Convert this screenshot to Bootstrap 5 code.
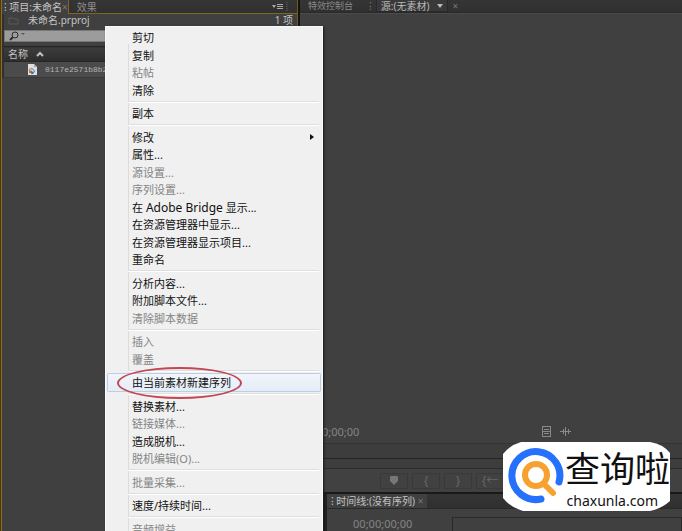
<!DOCTYPE html>
<html lang="zh-CN">
<head>
<meta charset="utf-8">
<meta name="viewport" content="width=device-width, initial-scale=1">
<title>未命名.prproj</title>
<link href="https://cdn.jsdelivr.net/npm/bootstrap@5.3.0/dist/css/bootstrap.min.css" rel="stylesheet">
<style>
body{background:#404040;color:#bdbdbd;font:10px/13px "Noto Sans","Noto Sans CJK SC",sans-serif}
button,input{font:inherit;color:inherit}
button{background:none;border:0;padding:0;white-space:nowrap}
svg{display:block;flex:none}
.project{width:44%;border-right:2px solid #15140c;border-left:1px solid #4a3a10}
.project-inner{border-left:1px solid #8a6c22;border-right:1px solid #6f5b20}
.tabs{height:13px;background:linear-gradient(#353535,#303030)}
.project .tabs{height:14px;line-height:12px}
.tab-off{border-bottom:1px solid #80661f;border-left:1px solid #80661f;color:#8c8c8c}
.tab-on{background:#404040;color:#c4c4c4}
.project .tab-on{padding:0 0 0 2px}
.dim{color:#777}
.tab-idle{color:#8a8a8a;font-size:9px}
.project-body{border-left:2px solid #303030}
.meta{height:13px;color:#c4c4c4}
.search{height:12px;background:#9c9c9c;border:1px solid #777;color:#333;margin-top:3px}
.search input{background:none;border:0;outline:0;min-width:0;height:10px}
.list thead th{height:15px;margin:0;padding:0 0 0 4px;background:linear-gradient(#3c3c3c,#2d2d2d);border-top:1px solid #262626;border-bottom:1px solid #252525;font-weight:400;color:#c4c4c4}
.list td{height:16px;padding:0 0 0 23px;background:#4b4b4b;color:#b4b4b4;border-bottom:1px solid #393939;font:8px/13px "Liberation Mono",monospace}
.monitor .tabs{border-bottom:1px solid #292929;line-height:12px}
.source-tab{background:#393939;border:1px solid #292929;border-top:0;color:#b8b8b8}
.view{border-top:1px solid #4b4b4b}
.code{color:#858585;font:11px/14px "Noto Sans",sans-serif}
.scrub{height:16px;border-top:1px solid #333;border-bottom:1px solid #242424;background:#3d3d3d}
.scrub-low{height:10px;border-bottom:1px solid #2b2b2b;background:#3d3d3d}
.transport{height:25px;background:#414141;border-bottom:2px solid #191919;padding-left:80px}
.transport button{width:28px;height:16px;border:1px solid #393939;color:#666;font-size:12px;line-height:12px}
.timeline{height:37px;border-left:4px solid #202020;margin-left:23px}
.timeline .tabs{height:15px;line-height:14px;border-bottom:1px solid #292929}
.timeline-body{padding-left:26px}
.tracks{border:1px solid #292929;border-bottom:0;margin-left:40px}
.context{left:105px;top:26px;width:218px;padding:2px;background:#f0f0f0;border:1px solid #fafafa;box-shadow:1px 1px 2px #181818;color:#111;font:11px/17px "Noto Sans","Noto Sans CJK SC",sans-serif;background-image:linear-gradient(#dcdcdc,#dcdcdc);background-repeat:no-repeat;background-size:1px 100%;background-position:22px 17px}
.context button{height:17px;padding:0 6px 0 24px;text-align:left}
.context button:nth-of-type(even){height:18px}
.context button:disabled{color:#858585}
.context hr{margin:2px 1px 2px 20px;height:2px;border:0;border-top:1px solid #dedede;border-bottom:1px solid #fff;opacity:1;background:none}
.latin{font-size:12px}
.context .chosen{background:linear-gradient(#f2f5fa,#e4ecf7);box-shadow:0 0 0 1px #b9cfe6;border-radius:1px}
.ring{left:9px;top:-7px;width:125px;height:32px;border:2px solid #c34653;border-radius:50%}
.brand{right:12px;bottom:20px;width:167px;height:69px;color:#111}
.brand-name{font:35px/50px "Noto Sans CJK SC",sans-serif}
.brand-site{font:14px/18px "Noto Sans",sans-serif;padding-right:12px}
</style>
<script src="https://cdn.jsdelivr.net/npm/bootstrap@5.3.0/dist/js/bootstrap.bundle.min.js"></script>
</head>
<body class="m-0 overflow-hidden">
<main class="d-flex vh-100 position-relative overflow-hidden">
  <section class="project d-flex flex-shrink-0">
    <div class="project-inner flex-fill">
      <div class="tabs d-flex">
        <button class="tab-on">⁝ 项目:未命名<span class="dim">×</span></button>
        <div class="tab-off d-flex flex-fill align-items-center justify-content-between">
          <button class="ps-2">效果</button>
          <button class="pe-2" aria-label="面板菜单"><svg width="17" height="10" viewBox="0 0 17 10"><path d="M0 3h4l-2 3zM5 2h6v1H5zm0 2h6v1H5zm0 2h6v1H5z" fill="#aaa"/><path d="M15 0v10" stroke="#666" stroke-dasharray="1 1"/></svg></button>
        </div>
      </div>
      <div class="project-body">
        <div class="meta d-flex align-items-center pe-1">
          <svg class="ms-1 me-2" width="12" height="10" viewBox="0 0 12 10"><path d="M1 8V2h4l1 1h4v5z" fill="none" stroke="#595959"/></svg>
          <span>未命名.prproj</span><span class="ms-auto">1 项</span>
        </div>
        <label class="search d-flex align-items-center">
          <svg class="ms-1" width="20" height="10" viewBox="0 0 20 10"><circle cx="6" cy="4" r="3" fill="none" stroke="#2d2d2d"/><path d="M4 6 1 9" stroke="#2d2d2d" stroke-width="2"/><path d="M12 2h4l-2 2z" fill="#555"/></svg>
          <input class="flex-fill" type="text" aria-label="搜索">
        </label>
        <table class="list w-100 mt-1">
          <thead><tr><th scope="col"><span class="d-flex align-items-center gap-2">名称<svg width="8" height="6" viewBox="0 0 8 6"><path d="M1 5l3-3 3 3" fill="none" stroke="#c4c4c4" stroke-width="2"/></svg></span></th></tr></thead>
          <tbody><tr><td><span class="d-flex align-items-center gap-2"><svg width="10" height="11" viewBox="0 0 10 11"><path d="M1 0h6l3 3v8H1z" fill="#dedede"/><path d="M7 0v3h3" fill="#a5a5a5"/><path d="M2 5l3-1v5H2z" fill="#b77848"/><path d="M5 4l3 3-2 3H4z" fill="#456ba7"/><path d="M3 6h3v2" stroke="#fff" fill="none"/></svg>0117e2571b8b24</span></td></tr></tbody>
        </table>
      </div>
    </div>
  </section>
  <section class="monitor d-flex flex-column flex-fill">
    <div class="tabs d-flex">
      <button class="tab-idle ps-2 pe-3">特效控制台</button>
      <span class="dim pe-1">⁝</span>
      <button class="source-tab px-1 d-flex align-items-center gap-2">源:(无素材)<svg width="6" height="4" viewBox="0 0 6 4"><path d="M0 0h6L3 4z" fill="#bbb"/></svg></button>
      <button class="dim px-1" aria-label="关闭">×</button>
    </div>
    <div class="view d-flex flex-fill align-items-end pb-1">
      <span class="code w-50 text-nowrap">00;00;00;00</span>
      <svg class="ms-auto" width="192" height="14" viewBox="0 0 192 14"><g fill="none" stroke="#8a8a8a"><path d="M52.500 1.500v10M60.500 1.500v10M52 1.500h9M54 4.500h5M52 6.500h9M54 8.500h5M52 11.500h9"/><path d="M70 6.500h11M73.500 4v5M75.500 2v9M78.500 4v5"/></g></svg>
    </div>
    <div class="scrub"></div>
    <div class="scrub-low"></div>
    <div class="transport d-flex align-items-center gap-1">
      <button class="d-flex align-items-center justify-content-center" aria-label="标记"><svg width="8" height="9" viewBox="0 0 8 9"><path d="M1 0h6l1 1v4L4 9 0 5V1z" fill="#777"/></svg></button>
      <button>{</button><button>}</button><button>{←</button>
    </div>
    <div class="timeline">
      <div class="tabs d-flex"><button class="tab-on ps-1 pe-1">⁝ 时间线:(没有序列) <span class="dim">×</span></button></div>
      <div class="timeline-body d-flex pt-1"><span class="code pt-1">00;00;00;00</span><div class="tracks flex-fill mt-1"></div></div>
    </div>
  </section>

  <div class="context position-absolute d-flex flex-column" role="menu">
    <button>剪切</button><button>复制</button><button disabled>粘帖</button><button>清除</button>
    <hr>
    <button>副本</button>
    <hr>
    <button class="d-flex align-items-center justify-content-between">修改<svg width="4" height="6" viewBox="0 0 4 6"><path d="M0 0l4 3-4 3z" fill="#111"/></svg></button>
    <button>属性...</button><button disabled>源设置...</button><button disabled>序列设置...</button>
    <button>在 <span class="latin">Adobe Bridge</span> 显示...</button><button>在资源管理器中显示...</button><button>在资源管理器显示项目...</button><button>重命名</button>
    <hr>
    <button>分析内容...</button><button>附加脚本文件...</button><button disabled>清除脚本数据</button>
    <hr>
    <button disabled>插入</button><button disabled>覆盖</button>
    <hr>
    <button class="chosen position-relative">由当前素材新建序列<span class="ring position-absolute"></span></button>
    <hr>
    <button>替换素材...</button><button disabled>链接媒体...</button><button>造成脱机...</button><button disabled>脱机编辑(O)...</button>
    <hr>
    <button disabled>批量采集...</button>
    <hr>
    <button>速度/持续时间...</button>
    <hr>
    <button disabled>音频增益</button>
  </div>

  <div class="brand position-absolute">
    <svg class="position-absolute top-0 start-0" width="167" height="69" viewBox="0 0 167 69"><path d="M18 0H147Q160 2 167 11V59Q158 67 147 69H20Q7 65 0 56V12Q7 3 18 0z" fill="#fff"/><g fill="none" stroke-linecap="round"><path d="M56 40A24 24 0 1 0 38 57" stroke="#2671fb" stroke-width="7"/><circle cx="33" cy="33" r="11" stroke="#f7a130" stroke-width="6"/><path d="M42 43l8 8" stroke="#f7a130" stroke-width="6"/></g></svg>
    <div class="position-relative d-flex flex-column align-items-end text-nowrap">
      <span class="brand-name">查询啦</span><span class="brand-site">chaxunla.com</span>
    </div>
  </div>
</main>
</body>
</html>
